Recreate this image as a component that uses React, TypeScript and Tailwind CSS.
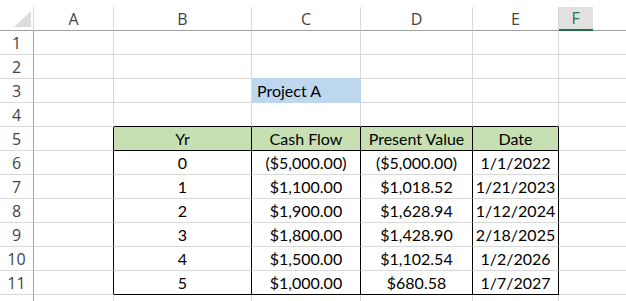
import React from 'react';

const cols = ['A', 'B', 'C', 'D', 'E', 'F'];
const widths = ['w-[34px]', 'w-[80px]', 'w-[138px]', 'w-[109px]', 'w-[112px]', 'w-[86px]', 'flex-1'];

const data: string[][] = [
  ['0', '($5,000.00)', '($5,000.00)', '1/1/2022'],
  ['1', '$1,100.00', '$1,018.52', '1/21/2023'],
  ['2', '$1,900.00', '$1,628.94', '1/12/2024'],
  ['3', '$1,800.00', '$1,428.90', '2/18/2025'],
  ['4', '$1,500.00', '$1,102.54', '1/2/2026'],
  ['5', '$1,000.00', '$680.58', '1/7/2027'],
];

const cellFont = "font-['Lato','Liberation_Sans',sans-serif] text-[16px] text-black";
const headFont = "font-['Open_Sans','Noto_Sans',sans-serif] text-[16px] text-[#444]";

function Cell({
  w,
  className = '',
  children,
}: {
  w: string;
  className?: string;
  children?: React.ReactNode;
}) {
  return (
    <div className={`${w} h-[24px] shrink-0 flex items-center justify-center border-r border-b border-[#d9d9d9] ${className}`}>
      {children}
    </div>
  );
}

export default function App() {
  const rowContent = (r: number): (string | null)[] => {
    if (r === 5) return ['Yr', 'Cash Flow', 'Present Value', 'Date'];
    if (r >= 6 && r <= 11) return data[r - 6];
    return [null, null, null, null];
  };

  return (
    <div className="w-[626px] h-[301px] overflow-hidden bg-white pt-[7px]">
      {/* column headers */}
      <div className="flex">
        <div className="w-[34px] h-[24px] shrink-0 relative border-r border-b border-r-[#d9d9d9] border-b-[#a0a0a0]">
          <svg className="absolute left-[14px] top-[4px]" width="18" height="17" viewBox="0 0 18 17">
            <polygon points="17,0 17,16 0,16" fill="#dcdcdc" />
          </svg>
        </div>
        {cols.map((c, i) =>
          c === 'F' ? (
            <div
              key={c}
              className={`${widths[i + 1]} h-[24px] flex items-center justify-center bg-[#e1e1e1] border-b-2 border-[#217346] font-['Open_Sans','Noto_Sans',sans-serif] text-[16px] text-[#217346]`}
            >
              {c}
            </div>
          ) : (
            <div
              key={c}
              className={`${widths[i + 1]} h-[24px] shrink-0 flex items-center justify-center border-r border-b border-r-[#d9d9d9] border-b-[#a0a0a0] ${headFont}`}
            >
              {c}
            </div>
          )
        )}
        <div className="flex-1 h-[24px] border-b border-[#a0a0a0]" />
      </div>

      {Array.from({ length: 12 }, (_, idx) => {
        const r = idx + 1;
        const inTable = r >= 5 && r <= 11;
        const content = rowContent(r);
        const bottomBlack = r === 4 || r === 5 || r === 11;
        return (
          <div key={r} className="flex">
            <div className={`w-[34px] h-[24px] shrink-0 flex items-center justify-center border-r border-b border-r-[#a0a0a0] border-b-[#d9d9d9] ${headFont}`}>
              {r <= 11 ? r : null}
            </div>
            <Cell w={widths[1]} className={inTable ? 'border-r-black' : r === 3 ? 'border-r-[#bdd7ee]' : ''} />
            {r === 3 ? (
              <>
                <Cell w={widths[2]} className="border-r-[#d9d9d9]" />
                <div className={`${widths[3]} h-[24px] shrink-0 flex items-center pl-[5px] bg-[#bdd7ee] border-r border-b border-[#bdd7ee] ${cellFont}`}>
                  Project A
                </div>
                <Cell w={widths[4]} />
                <Cell w={widths[5]} />
              </>
            ) : (
              content.map((t, j) => (
                <Cell
                  key={j}
                  w={widths[j + 2]}
                  className={`${cellFont} ${inTable ? 'border-r-black' : ''} ${bottomBlack ? 'border-b-black' : ''} ${r === 5 ? 'bg-[#c6e0b4]' : ''} ${r === 2 && j === 1 ? 'border-b-[#bdd7ee]' : ''}`}
                >
                  {t}
                </Cell>
              ))
            )}
            <div className="flex-1 h-[24px] border-b border-[#d9d9d9]" />
          </div>
        );
      })}
    </div>
  );
}
